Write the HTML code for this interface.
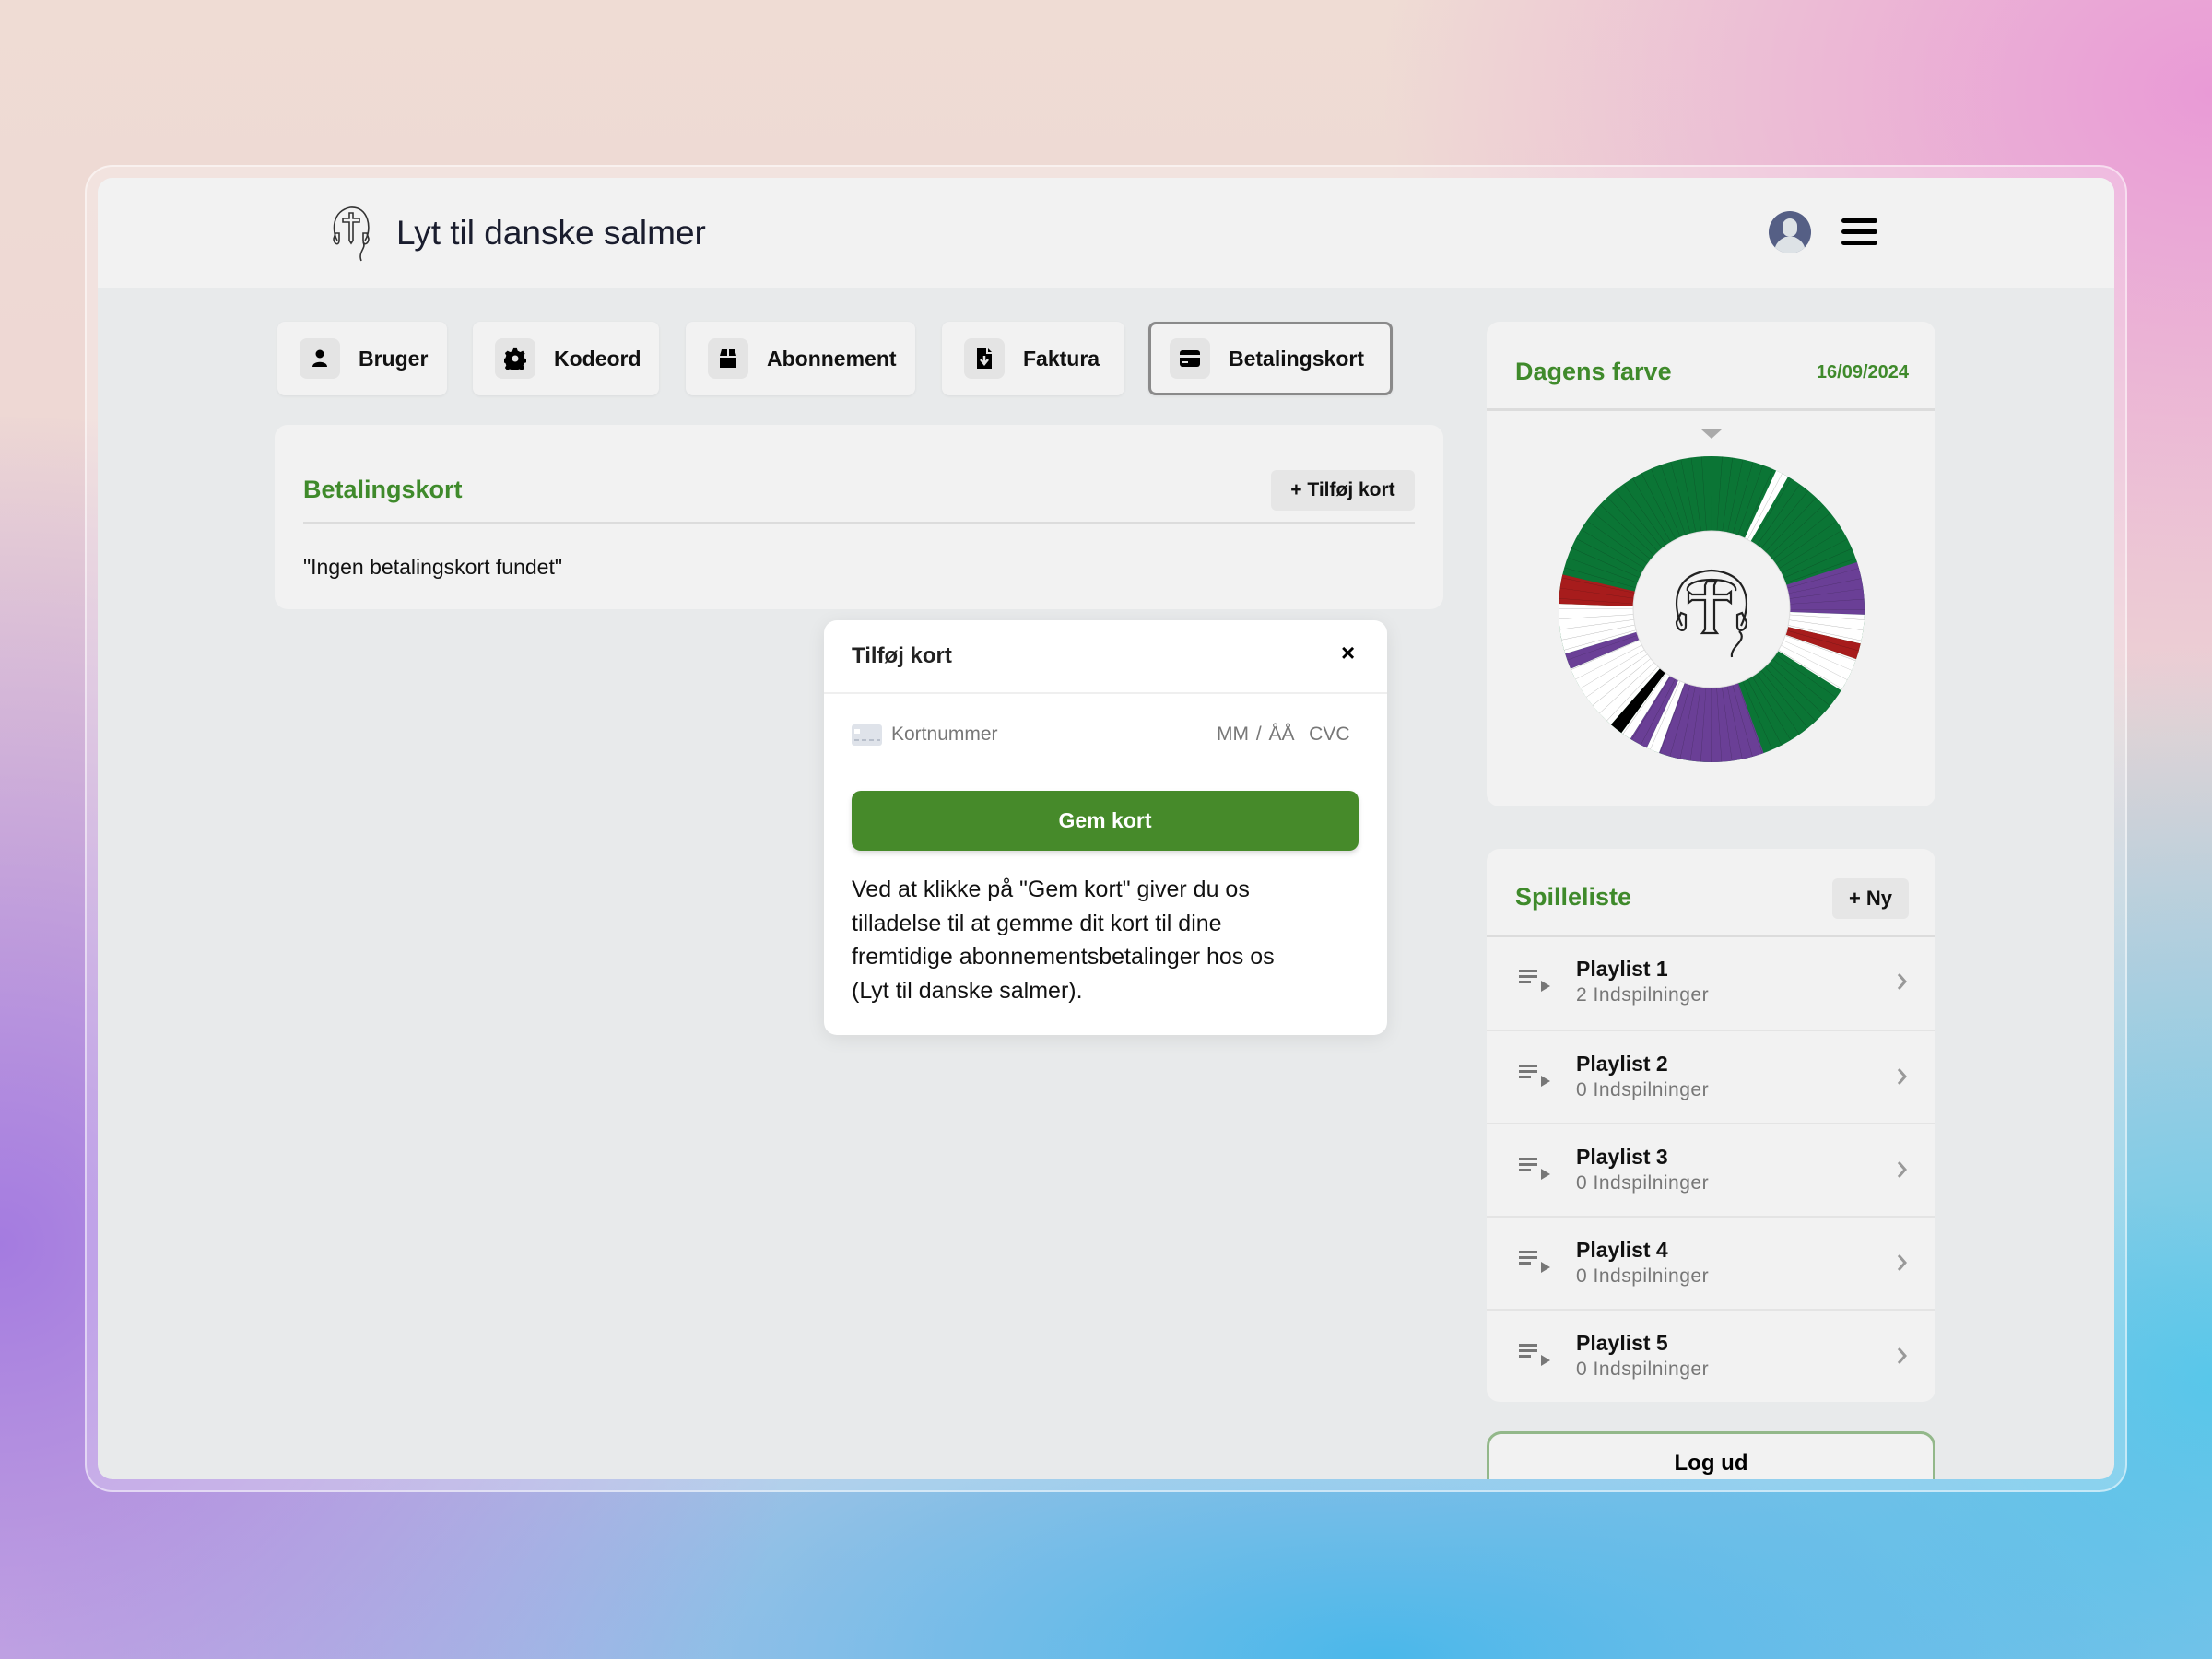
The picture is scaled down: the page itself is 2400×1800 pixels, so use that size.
<!DOCTYPE html>
<html><head><meta charset="utf-8">
<style>
*{box-sizing:border-box;margin:0;padding:0}
html,body{width:2400px;height:1800px;overflow:hidden}
body{font-family:"Liberation Sans",sans-serif;position:relative;
background:
radial-gradient(ellipse 900px 700px at 2400px 100px,#e99ad6 0%,rgba(233,154,214,0) 100%),
radial-gradient(ellipse 900px 900px at 0px 1350px,#a47be0 0%,rgba(164,123,224,0) 100%),
radial-gradient(ellipse 1500px 600px at 1500px 1800px,#4ab8ea 0%,rgba(74,184,234,0) 100%),
radial-gradient(ellipse 900px 800px at 2400px 1500px,#5ccbea 0%,rgba(92,203,234,0) 100%),
linear-gradient(180deg,#efdcd4 0%,#ecd3d4 50%,#d9c6e4 100%);}
.frame{position:absolute;left:92px;top:179px;width:2216px;height:1440px;border-radius:30px;background:rgba(255,255,255,0.25);border:2px solid rgba(255,255,255,0.5)}
.win{position:absolute;left:106px;top:193px;width:2188px;height:1412px;border-radius:16px;background:#e8eaeb;overflow:hidden}
.hdr{position:absolute;left:0;top:0;width:100%;height:119px;background:#f2f2f2}
.title{position:absolute;left:324px;top:39px;font-size:37px;color:#1a1d2e}
.abs{position:absolute}
.tab{position:absolute;top:156px;height:80px;background:#f2f2f2;border-radius:8px;box-shadow:0 1px 3px rgba(0,0,0,0.06);font-weight:bold;font-size:23px;color:#111;display:flex;align-items:center}
.tab .ic{width:44px;height:44px;border-radius:8px;background:#e4e4e4;margin-left:24px;margin-right:20px;display:flex;align-items:center;justify-content:center}
.card{position:absolute;background:#f2f2f2;border-radius:14px}
.green{color:#3f8a2b;font-weight:bold}
.row{position:absolute;left:0;width:100%;height:101px;border-top:2px solid #e4e4e4}
.row .n{position:absolute;left:97px;top:22px;font-size:23px;font-weight:bold;color:#111}
.row .s{position:absolute;left:97px;top:52px;font-size:21px;color:#777;letter-spacing:0.5px}
.row svg.pi{position:absolute;left:35px;top:36px}
.row svg.ch{position:absolute;left:444px;top:38px}
</style></head><body>
<div class="frame"></div>
<div class="win">
 <div class="hdr">
  <svg class="abs" style="left:252px;top:28px" width="48" height="64" viewBox="0 0 48 64" fill="none" stroke="#333" stroke-width="1.6">
   <path d="M8 40 C2 30 2 8 22 4 C42 2 46 28 38 40"/>
   <path d="M6 32 L4 38 C4 44 10 46 10 40 L10 32 Z"/><path d="M40 32 L42 38 C42 44 36 46 36 40 L36 32 Z"/>
   <path d="M21 10 h4 v6 h7 v4 h-7 v20 l-2 3 l-2 -3 v-20 h-7 v-4 h7 z"/>
   <path d="M36 42 C40 48 30 52 34 62"/>
  </svg>
  <div class="title">Lyt til danske salmer</div>
  <svg class="abs" style="left:1813px;top:36px" width="46" height="46" viewBox="0 0 46 46">
   <defs><clipPath id="cc"><circle cx="23" cy="23" r="23"/></clipPath></defs>
   <circle cx="23" cy="23" r="23" fill="#555f85"/>
   <g clip-path="url(#cc)" fill="#dde2e6"><rect x="15" y="8" width="16" height="20" rx="8"/><path d="M6 46 C6 34 14 30 18 28 L28 28 C32 30 40 34 40 46 Z"/></g>
  </svg>
  <div class="abs" style="left:1892px;top:44px;width:39px;height:5px;border-radius:3px;background:#000"></div>
  <div class="abs" style="left:1892px;top:56px;width:39px;height:5px;border-radius:3px;background:#000"></div>
  <div class="abs" style="left:1892px;top:68px;width:39px;height:5px;border-radius:3px;background:#000"></div>
 </div>

 <div class="tab" style="left:195px;width:184px"><div class="ic"><svg width="18" height="20" viewBox="0 0 18 20"><circle cx="9" cy="5" r="4.5"/><path d="M1 19 C1 12 17 12 17 19 Z"/></svg></div>Bruger</div>
 <div class="tab" style="left:407px;width:202px"><div class="ic"><svg width="24" height="24" viewBox="0 0 24 24"><path d="M10 1h4l1 3 3 1.5 3-1.5 2.5 3-1.5 3 .5 2.5 3 1v4l-3 1-1 3 1.5 3-3 2.5-3-1.5-2.5 1-1 3h-4l-1-3-3-1-3 1.5-2.5-3 1.5-3-1-2.5-3-1v-4l3-1 1-3-1.5-3 3-2.5 3 1.5 2.5-1z" transform="scale(0.92) translate(1 0)"/><circle cx="12" cy="12" r="3.5" fill="#e4e4e4"/></svg></div>Kodeord</div>
 <div class="tab" style="left:638px;width:249px"><div class="ic"><svg width="22" height="22" viewBox="0 0 22 22"><path d="M2 8 L4 1 H10 V8 Z M12 8 V1 H18 L20 8 Z M2 10 H20 V21 H2 Z"/></svg></div>Abonnement</div>
 <div class="tab" style="left:916px;width:198px"><div class="ic"><svg width="18" height="24" viewBox="0 0 18 24"><path d="M1 1 H11 V7 H17 V23 H1 Z M13 1 L17 5 H13 Z"/><path d="M9 9 V17 M5 13 L9 18 L13 13" stroke="#e4e4e4" stroke-width="2.5" fill="none"/></svg></div>Faktura</div>
 <div class="tab" style="left:1140px;width:265px;border:3px solid #8a8a8a;background:#f2f2f2"><div class="ic" style="margin-left:20px"><svg width="24" height="20" viewBox="0 0 24 20"><rect x="1" y="1" width="22" height="18" rx="3"/><rect x="1" y="6" width="22" height="3" fill="#e4e4e4"/><rect x="4" y="13" width="6" height="2" fill="#e4e4e4"/></svg></div>Betalingskort</div>

 <div class="card" style="left:192px;top:268px;width:1268px;height:200px">
  <div class="abs green" style="left:31px;top:55px;font-size:27px">Betalingskort</div>
  <div class="abs" style="left:1081px;top:49px;width:156px;height:44px;background:#e6e6e6;border-radius:6px;font-weight:bold;font-size:21px;color:#111;line-height:44px;text-align:center">+ Tilføj kort</div>
  <div class="abs" style="left:31px;top:105px;width:1206px;height:3px;background:#dcdcdc"></div>
  <div class="abs" style="left:31px;top:141px;font-size:23px;color:#111">"Ingen betalingskort fundet"</div>
 </div>

 <div class="abs" style="left:788px;top:480px;width:611px;height:450px;background:#fff;border-radius:14px;box-shadow:0 4px 20px rgba(0,0,0,0.08)">
  <div class="abs" style="left:30px;top:25px;font-size:24px;font-weight:bold;color:#222">Tilføj kort</div>
  <div class="abs" style="left:561px;top:20px;font-size:26px;font-weight:bold;color:#000">×</div>
  <div class="abs" style="left:0;top:78px;width:100%;height:2px;background:#efefef"></div>
  <svg class="abs" style="left:30px;top:113px" width="33" height="23" viewBox="0 0 33 23"><rect width="33" height="23" rx="3" fill="#dfe3ea"/><rect x="3" y="5" width="6" height="5" fill="#fff"/><path d="M3 17h5M11 17h5M19 17h5M27 17h4" stroke="#b8bfcb" stroke-width="2"/></svg>
  <div class="abs" style="left:73px;top:112px;font-size:21px;color:#777">Kortnummer</div>
  <div class="abs" style="left:426px;top:112px;font-size:21px;color:#777;word-spacing:2px">MM / ÅÅ &nbsp;CVC</div>
  <div class="abs" style="left:30px;top:185px;width:550px;height:65px;background:#468a2a;border-radius:10px;color:#fff;font-weight:bold;font-size:23px;line-height:65px;text-align:center;box-shadow:0 3px 6px rgba(0,0,0,0.15)">Gem kort</div>
  <div class="abs" style="left:30px;top:274px;white-space:nowrap;font-size:25px;line-height:36.7px;color:#111">Ved at klikke på "Gem kort" giver du os<br>tilladelse til at gemme dit kort til dine<br>fremtidige abonnementsbetalinger hos os<br>(Lyt til danske salmer).</div>
 </div>

 <div class="card" style="left:1507px;top:156px;width:487px;height:526px">
  <div class="abs green" style="left:31px;top:39px;font-size:27px">Dagens farve</div>
  <div class="abs green" style="right:29px;top:44px;font-size:20px">16/09/2024</div>
  <div class="abs" style="left:0;top:94px;width:100%;height:3px;background:#dcdcdc"></div>
  <svg class="abs" style="left:0;top:100px" width="487" height="426" viewBox="0 0 487 426">
   <path d="M233 17 h22 l-11 10 z" fill="#aaa"/>
   <g transform="translate(244 212) rotate(-90)">
    <circle r="125.5" fill="none" stroke="#0b7535" stroke-width="81"/>
    <g fill="none" stroke-width="81">
     <circle r="125.5" stroke="#fff" stroke-dasharray="10.95 788.54" stroke-dashoffset="-54.76"/>
     <circle r="125.5" stroke="#6a3f96" stroke-dasharray="43.81 788.54" stroke-dashoffset="-157.71"/>
     <circle r="125.5" stroke="#fff" stroke-dasharray="24.09 788.54" stroke-dashoffset="-201.52"/>
     <circle r="125.5" stroke="#a71c1c" stroke-dasharray="13.14 788.54" stroke-dashoffset="-225.61"/>
     <circle r="125.5" stroke="#fff" stroke-dasharray="28.48 788.54" stroke-dashoffset="-238.75"/>
     <circle r="125.5" stroke="#6a3f96" stroke-dasharray="87.62 788.54" stroke-dashoffset="-350.46"/>
     <circle r="125.5" stroke="#fff" stroke-dasharray="10.95 788.54" stroke-dashoffset="-438.08"/>
     <circle r="125.5" stroke="#6a3f96" stroke-dasharray="15.33 788.54" stroke-dashoffset="-449.03"/>
     <circle r="125.5" stroke="#fff" stroke-dasharray="8.76 788.54" stroke-dashoffset="-464.36"/>
     <circle r="125.5" stroke="#000" stroke-dasharray="10.95 788.54" stroke-dashoffset="-473.13"/>
     <circle r="125.5" stroke="#fff" stroke-dasharray="56.95 788.54" stroke-dashoffset="-484.08"/>
     <circle r="125.5" stroke="#6a3f96" stroke-dasharray="13.14 788.54" stroke-dashoffset="-541.03"/>
     <circle r="125.5" stroke="#fff" stroke-dasharray="41.62 788.54" stroke-dashoffset="-554.17"/>
     <circle r="125.5" stroke="#a71c1c" stroke-dasharray="24.09 788.54" stroke-dashoffset="-595.79"/>
     <circle r="125.5" stroke="#111" stroke-opacity="0.35" stroke-dasharray="0.35 8.22"/>
    </g>
    <circle r="85" fill="#f2f2f2" stroke="#ddd" stroke-width="1"/>
   </g>
   <g transform="translate(244 212)" fill="none" stroke="#222" stroke-width="2.2">
    <path d="M-32 18 C-44 -6 -40 -40 0 -42 C40 -40 44 -6 32 18"/>
    <path d="M-26 -20 C-30 -36 30 -36 26 -20"/>
    <path d="M-33 4 L-38 14 C-38 24 -28 26 -28 18 L-28 6 Z"/>
    <path d="M33 4 L38 14 C38 24 28 26 28 18 L28 6 Z"/>
    <path d="M-5 -30 h10 l-2 4 v10 h14 l4 -3 v12 l-4 -3 h-14 v32 l3 4 h-16 l3 -4 v-32 h-14 l-4 3 v-12 l4 3 h14 v-10 z"/>
    <path d="M30 24 C40 34 20 40 22 52"/>
   </g>
  </svg>
 </div>

 <div class="card" style="left:1507px;top:728px;width:487px;height:600px">
  <div class="abs green" style="left:31px;top:37px;font-size:27px">Spilleliste</div>
  <div class="abs" style="left:375px;top:32px;width:83px;height:44px;background:#e6e6e6;border-radius:6px;font-weight:bold;font-size:22px;color:#111;line-height:44px;text-align:center">+ Ny</div>
  <div class="abs" style="left:0;top:93px;width:100%;height:3px;background:#dcdcdc"></div>
  <div class="row" style="top:95px;border-top:none"><svg class="pi" width="36" height="28" viewBox="0 0 36 28" fill="#777"><rect x="0" y="0" width="20" height="3"/><rect x="0" y="6" width="20" height="3"/><rect x="0" y="12" width="13" height="3"/><path d="M24 12 L34 18 L24 24 Z"/></svg><div class="n">Playlist 1</div><div class="s">2 Indspilninger</div><svg class="ch" width="14" height="22" viewBox="0 0 14 22"><path d="M3 3 L10 11 L3 19" stroke="#999" stroke-width="3" fill="none"/></svg></div>
  <div class="row" style="top:196px"><svg class="pi" width="36" height="28" viewBox="0 0 36 28" fill="#777"><rect x="0" y="0" width="20" height="3"/><rect x="0" y="6" width="20" height="3"/><rect x="0" y="12" width="13" height="3"/><path d="M24 12 L34 18 L24 24 Z"/></svg><div class="n">Playlist 2</div><div class="s">0 Indspilninger</div><svg class="ch" width="14" height="22" viewBox="0 0 14 22"><path d="M3 3 L10 11 L3 19" stroke="#999" stroke-width="3" fill="none"/></svg></div>
  <div class="row" style="top:297px"><svg class="pi" width="36" height="28" viewBox="0 0 36 28" fill="#777"><rect x="0" y="0" width="20" height="3"/><rect x="0" y="6" width="20" height="3"/><rect x="0" y="12" width="13" height="3"/><path d="M24 12 L34 18 L24 24 Z"/></svg><div class="n">Playlist 3</div><div class="s">0 Indspilninger</div><svg class="ch" width="14" height="22" viewBox="0 0 14 22"><path d="M3 3 L10 11 L3 19" stroke="#999" stroke-width="3" fill="none"/></svg></div>
  <div class="row" style="top:398px"><svg class="pi" width="36" height="28" viewBox="0 0 36 28" fill="#777"><rect x="0" y="0" width="20" height="3"/><rect x="0" y="6" width="20" height="3"/><rect x="0" y="12" width="13" height="3"/><path d="M24 12 L34 18 L24 24 Z"/></svg><div class="n">Playlist 4</div><div class="s">0 Indspilninger</div><svg class="ch" width="14" height="22" viewBox="0 0 14 22"><path d="M3 3 L10 11 L3 19" stroke="#999" stroke-width="3" fill="none"/></svg></div>
  <div class="row" style="top:499px"><svg class="pi" width="36" height="28" viewBox="0 0 36 28" fill="#777"><rect x="0" y="0" width="20" height="3"/><rect x="0" y="6" width="20" height="3"/><rect x="0" y="12" width="13" height="3"/><path d="M24 12 L34 18 L24 24 Z"/></svg><div class="n">Playlist 5</div><div class="s">0 Indspilninger</div><svg class="ch" width="14" height="22" viewBox="0 0 14 22"><path d="M3 3 L10 11 L3 19" stroke="#999" stroke-width="3" fill="none"/></svg></div>
 </div>

 <div class="abs" style="left:1507px;top:1360px;width:487px;height:90px;border:3px solid #93b88a;border-radius:16px;background:#f2f2f2;text-align:center;font-weight:bold;font-size:24px;color:#000;padding-top:18px">Log ud</div>
</div>
</body></html>
